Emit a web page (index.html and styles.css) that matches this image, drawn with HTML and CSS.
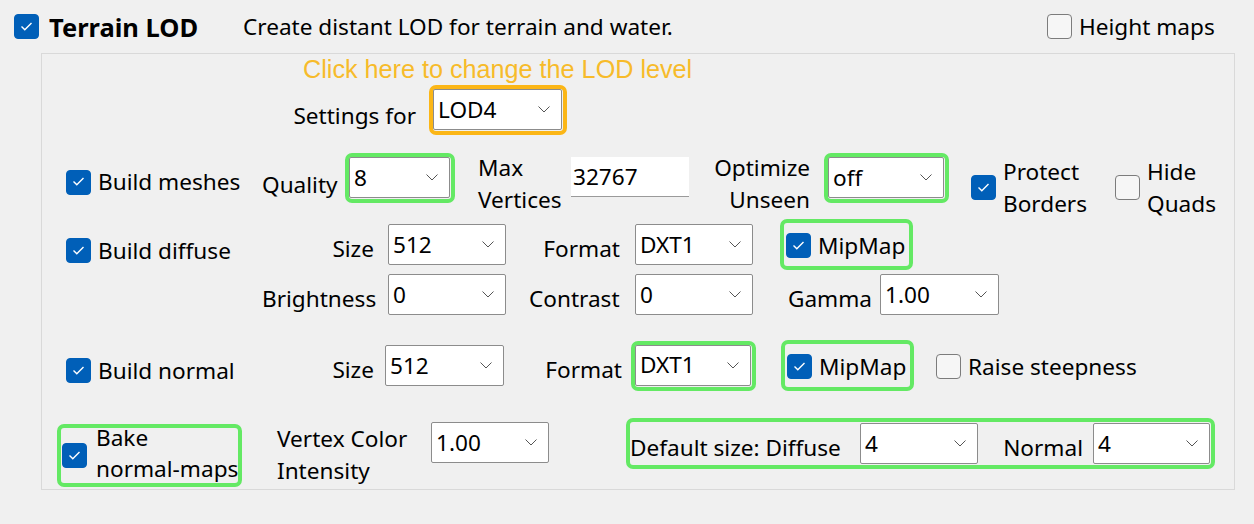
FILE: index.html
```html
<!DOCTYPE html>
<html>
<head>
<meta charset="utf-8">
<link rel="stylesheet" href="styles.css">
</head>
<body>
<div class="header">
  <label class="cl title-cell"><span class="chk on"><svg viewBox="0 0 25 25"><polyline points="7.5,12.5 10.8,15.8 17.5,9"/></svg></span><span class="title">Terrain LOD</span></label>
  <span class="desc">Create distant LOD for terrain and water.</span>
  <label class="cl"><span class="chk"></span><span>Height maps</span></label>
</div>

<div class="group">
  <div class="hint">Click here to change the LOD level</div>

  <div class="row row-settings">
    <span class="lbl settings-lbl">Settings for</span>
    <div class="hl hl-orange"><div class="combo c-lod"><span>LOD4</span><svg class="chev" viewBox="0 0 12 7"><polyline points="0.5,0.5 6,6 11.5,0.5"/></svg></div></div>
  </div>

  <div class="row row-mesh">
    <label class="cl first"><span class="chk on"><svg viewBox="0 0 25 25"><polyline points="7.5,12.5 10.8,15.8 17.5,9"/></svg></span><span>Build meshes</span></label>
    <span class="lbl q-lbl">Quality</span>
    <div class="hl hl-green hl-quality"><div class="combo c-q"><span>8</span><svg class="chev" viewBox="0 0 12 7"><polyline points="0.5,0.5 6,6 11.5,0.5"/></svg></div></div>
    <span class="lbl2 mv-lbl">Max<br>Vertices</span>
    <div class="textbox">32767</div>
    <span class="lbl2 ou-lbl">Optimize<br>Unseen</span>
    <div class="hl hl-green hl-opt"><div class="combo c-off"><span>off</span><svg class="chev" viewBox="0 0 12 7"><polyline points="0.5,0.5 6,6 11.5,0.5"/></svg></div></div>
    <label class="cl protect"><span class="chk on"><svg viewBox="0 0 25 25"><polyline points="7.5,12.5 10.8,15.8 17.5,9"/></svg></span><span class="two">Protect<br>Borders</span></label>
    <label class="cl"><span class="chk"></span><span class="two">Hide<br>Quads</span></label>
  </div>

  <div class="row row-diffuse">
    <label class="cl first"><span class="chk on"><svg viewBox="0 0 25 25"><polyline points="7.5,12.5 10.8,15.8 17.5,9"/></svg></span><span>Build diffuse</span></label>
    <span class="lbl l-size">Size</span>
    <div class="combo c-std gap23"><span>512</span><svg class="chev" viewBox="0 0 12 7"><polyline points="0.5,0.5 6,6 11.5,0.5"/></svg></div>
    <span class="lbl l-format">Format</span>
    <div class="combo c-std gap27"><span>DXT1</span><svg class="chev" viewBox="0 0 12 7"><polyline points="0.5,0.5 6,6 11.5,0.5"/></svg></div>
    <div class="hl hl-green hl-mip"><label class="cl"><span class="chk on"><svg viewBox="0 0 25 25"><polyline points="7.5,12.5 10.8,15.8 17.5,9"/></svg></span><span>MipMap</span></label></div>
  </div>

  <div class="row row-bright">
    <span class="lbl l-bright">Brightness</span>
    <div class="combo c-std gap23"><span>0</span><svg class="chev" viewBox="0 0 12 7"><polyline points="0.5,0.5 6,6 11.5,0.5"/></svg></div>
    <span class="lbl l-contrast">Contrast</span>
    <div class="combo c-std gap35"><span>0</span><svg class="chev" viewBox="0 0 12 7"><polyline points="0.5,0.5 6,6 11.5,0.5"/></svg></div>
    <span class="lbl l-gamma">Gamma</span>
    <div class="combo c-std c-gamma"><span>1.00</span><svg class="chev" viewBox="0 0 12 7"><polyline points="0.5,0.5 6,6 11.5,0.5"/></svg></div>
  </div>

  <div class="row row-normal">
    <label class="cl first"><span class="chk on"><svg viewBox="0 0 25 25"><polyline points="7.5,12.5 10.8,15.8 17.5,9"/></svg></span><span>Build normal</span></label>
    <span class="lbl l-nsize">Size</span>
    <div class="combo c-std c-nsize"><span>512</span><svg class="chev" viewBox="0 0 12 7"><polyline points="0.5,0.5 6,6 11.5,0.5"/></svg></div>
    <span class="lbl l-nformat">Format</span>
    <div class="hl hl-green hl-nformat"><div class="combo c-off"><span>DXT1</span><svg class="chev" viewBox="0 0 12 7"><polyline points="0.5,0.5 6,6 11.5,0.5"/></svg></div></div>
    <div class="hl hl-green hl-mip hl-nmip"><label class="cl"><span class="chk on"><svg viewBox="0 0 25 25"><polyline points="7.5,12.5 10.8,15.8 17.5,9"/></svg></span><span>MipMap</span></label></div>
    <label class="cl"><span class="chk"></span><span>Raise steepness</span></label>
  </div>

  <div class="row row-bake">
    <div class="hl hl-green hl-bake"><label class="cl"><span class="chk on"><svg viewBox="0 0 25 25"><polyline points="7.5,12.5 10.8,15.8 17.5,9"/></svg></span><span class="bake-txt">Bake<br>normal-maps</span></label></div>
    <span class="lbl2 vc-lbl">Vertex Color<br>Intensity</span>
    <div class="combo c-std c-vc"><span>1.00</span><svg class="chev" viewBox="0 0 12 7"><polyline points="0.5,0.5 6,6 11.5,0.5"/></svg></div>
    <div class="hl hl-green hl-default">
      <span class="lbl ds-lbl">Default size: Diffuse</span>
      <div class="combo c-std"><span>4</span><svg class="chev" viewBox="0 0 12 7"><polyline points="0.5,0.5 6,6 11.5,0.5"/></svg></div>
      <span class="lbl n-lbl">Normal</span>
      <div class="combo c-std c-n"><span>4</span><svg class="chev" viewBox="0 0 12 7"><polyline points="0.5,0.5 6,6 11.5,0.5"/></svg></div>
    </div>
  </div>
</div>
</body>
</html>
```

FILE: styles.css
```css
* { box-sizing: border-box; }

body {
  margin: 0;
  background: #f0f0f0;
  font-family: "Noto Sans", "Open Sans", sans-serif;
  font-size: 22.6px;
  color: #000;
  width: 1254px;
  height: 524px;
  overflow: hidden;
}

/* header */
.header {
  display: flex;
  align-items: center;
  height: 53px;
  padding-left: 14px;
}
.title-cell { width: 229px; }
.title-cell .chk { margin-right: 10px; }
.title {
  font-weight: 700;
  font-size: 25.5px;
}
.desc { width: 804px; }

/* checkbox */
.cl {
  display: flex;
  align-items: center;
  line-height: 30px;
  white-space: nowrap;
}
.chk {
  flex: none;
  width: 25px;
  height: 25px;
  border-radius: 4px;
  border: 1.5px solid #7c7c7c;
  background: #f6f6f6;
  margin-right: 7px;
  display: flex;
}
.chk.on {
  background: #005fb8;
  border-color: #005fb8;
}
.chk svg {
  width: 25px;
  height: 25px;
  margin: -1.5px;
  fill: none;
  stroke: #fff;
  stroke-width: 1.4;
}
.two { line-height: 32px; }

/* group box */
.group {
  margin-left: 41px;
  width: 1194px;
  height: 437px;
  border: 1px solid #d9d9d9;
}

.hint {
  height: 31px;
  padding-left: 261px;
  font-family: "Liberation Sans", Arial, sans-serif;
  font-size: 25.2px;
  line-height: 31px;
  color: #f7bb2a;
}

.row {
  display: flex;
  align-items: center;
}

.lbl {
  flex: none;
  text-align: right;
  line-height: 30px;
  margin-top: 8px;
  white-space: nowrap;
}
.lbl2 {
  flex: none;
  line-height: 32px;
  white-space: nowrap;
}

/* combo */
.combo {
  flex: none;
  display: flex;
  align-items: center;
  justify-content: space-between;
  height: 41px;
  background: #fff;
  border: 1px solid #8c8c8c;
  border-radius: 2px;
  padding: 0 11px 0 4px;
  line-height: 30px;
}
.chev {
  width: 12px;
  height: 7px;
  fill: none;
  stroke: #555;
  stroke-width: 1;
}
.c-std { width: 118px; }

/* highlight wrappers */
.hl {
  flex: none;
  display: flex;
  align-items: flex-start;
  border: 4px solid;
  border-radius: 7px;
  padding: 0 1px 1px 0;
}
.hl-orange { border-color: #fbb616; }
.hl-green { border-color: #64e964; }

/* settings row */
.row-settings {
  height: 51px;
  padding-left: 220px;
  align-items: flex-start;
}
.settings-lbl {
  width: 167px;
  padding-right: 13px;
  margin-top: 16px;
}
.c-lod { width: 129px; }

/* mesh row */
.row-mesh {
  margin-top: 17px;
  height: 64px;
  padding-left: 24px;
}
.first { width: 196px; margin-top: -6px; }
.q-lbl { width: 83px; padding-right: 8px; margin-top: 0; }
.hl-quality { align-self: flex-start; margin-right: 23px; }
.c-q { width: 101px; }
.mv-lbl { width: 93px; margin-top: -3px; }
.textbox {
  flex: none;
  align-self: flex-start;
  margin-top: 4px;
  width: 118px;
  height: 40px;
  background: #fff;
  border-bottom: 1px solid #9a9a9a;
  padding-left: 2px;
  line-height: 40px;
}
.ou-lbl { width: 135px; padding-right: 14px; text-align: right; margin-top: -3px; }
.hl-opt { align-self: flex-start; margin-right: 22px; }
.c-off { width: 116px; }
.protect { width: 144px; margin-top: 5px; }
.row-mesh .cl:last-child { margin-top: 5px; }

/* diffuse row */
.row-diffuse {
  margin-top: 2px;
  height: 51px;
  padding-left: 24px;
}
.row-diffuse .first { margin-top: 12px; }
.l-size { width: 126px; padding-right: 14px; }
.l-format { width: 106px; padding-right: 15px; }
.gap23 { margin-right: 23px; }
.gap27 { margin-right: 27px; }
.gap35 { margin-right: 35px; }
.hl-mip {
  width: 133px;
  height: 51px;
  align-items: center;
  padding: 0 0 0 2px;
}
.hl-mip .cl { margin-top: 2px; }

/* brightness row */
.row-bright {
  margin-top: 4px;
  height: 41px;
  padding-left: 220px;
}
.l-bright { width: 126px; padding-right: 15px; }
.l-contrast { width: 106px; padding-right: 17px; }
.l-gamma { width: 92px; padding-right: 11px; }
.c-gamma { width: 119px; }

/* normal row */
.row-normal {
  margin-top: 25px;
  height: 51px;
  padding-left: 24px;
}
.row-normal .first { margin-top: 10px; }
.l-nsize { width: 123px; padding-right: 11px; }
.c-nsize { width: 119px; margin-right: 25px; }
.l-nformat { width: 102px; padding-right: 9px; }
.hl-nformat { margin-right: 25px; }
.hl-nmip { margin-right: 22px; }
.row-normal > .cl:last-child { margin-top: 2px; }

/* bake row */
.row-bake {
  margin-top: 27px;
  height: 69px;
  padding-left: 15px;
  align-items: flex-start;
}
.hl-bake {
  width: 185px;
  height: 63px;
  margin-top: 6px;
  margin-right: 35px;
  align-items: center;
  padding: 0;
  overflow: visible;
}
.hl-bake .cl { margin-left: 1px; }
.hl-bake .chk { margin-right: 9px; }
.bake-txt {
  line-height: 31px;
  margin-top: -6px;
}
.vc-lbl { width: 154px; margin-top: 5px; }
.c-vc { margin-top: 4px; margin-right: 77px; }
.hl-default {
  width: 589px;
  height: 51px;
  align-items: center;
  padding: 0;
}
.ds-lbl { width: 230px; text-align: left; margin-top: 8px; }
.n-lbl { width: 115px; padding-right: 10px; }
.c-n { width: 117px; }
```
